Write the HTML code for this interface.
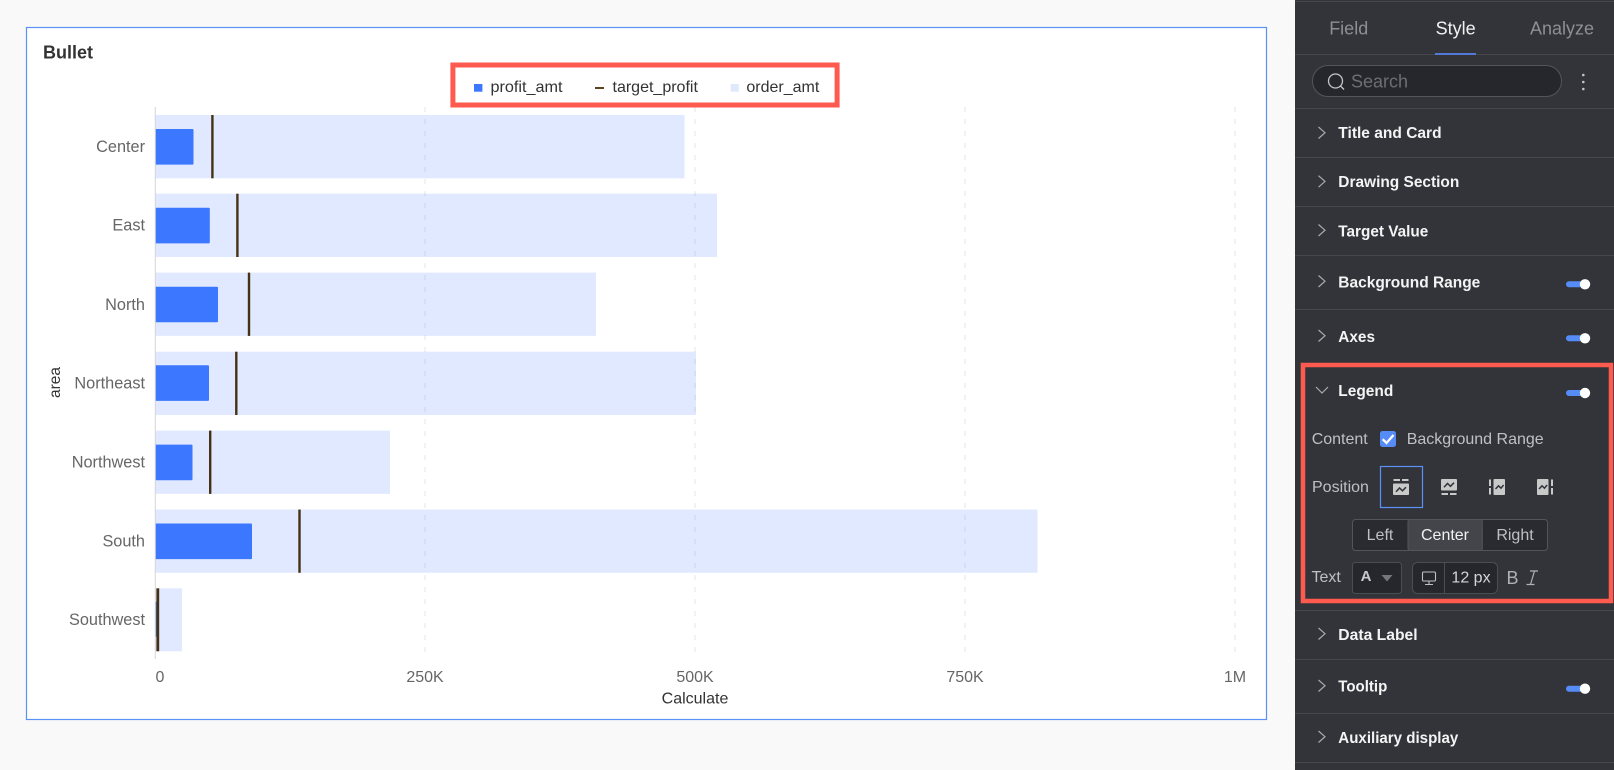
<!DOCTYPE html>
<html lang="en">
<head>
<meta charset="utf-8">
<title>Bullet</title>
<style>
html,body{margin:0;padding:0;width:1614px;height:770px;overflow:hidden;background:#f9f9f9}
svg{display:block;font-family:"Liberation Sans",Arial,sans-serif}
text{dominant-baseline:central}
.cat{font-size:16.3px;fill:#666;text-anchor:end;transform:translateY(.8px)}
.ax{font-size:16px;fill:#666;text-anchor:middle}
.leg{font-size:16px;fill:#333}
.row{font-size:15.3px;font-weight:700;fill:#f4f4f5;transform:translateY(.5px)}
.lbl{font-size:16px;fill:#bfc0c3}
.chev{fill:none;stroke:#a9aaad;stroke-width:1.2}
.line{stroke:#46474c;stroke-width:1}
.grid{stroke:#e6e6e6;stroke-width:1;stroke-dasharray:5 7}
.bg{fill:#3c78ff;fill-opacity:.16}
.fg{fill:#3c78ff}
.tg{fill:#453213}
.tt{fill:#568cf5}
.kn{fill:#fff}
.ico{fill:#c9c9c9}
.zig{fill:none;stroke:#333439;stroke-width:1.5}
</style>
</head>
<body>
<svg width="1614" height="770" viewBox="0 0 1614 770" xmlns="http://www.w3.org/2000/svg">
<rect width="1614" height="770" fill="#f9f9f9"/>
<!-- chart card -->
<rect x="26.5" y="27.5" width="1240" height="692" fill="#fff" stroke="#5b90f5" stroke-width="1.2"/>
<text x="43" y="52.5" font-size="18" font-weight="700" fill="#333">Bullet</text>

<!-- grid -->
<line class="grid" x1="425" y1="107" x2="425" y2="657"/>
<line class="grid" x1="695" y1="107" x2="695" y2="657"/>
<line class="grid" x1="965" y1="107" x2="965" y2="657"/>
<line class="grid" x1="1235" y1="107" x2="1235" y2="657"/>

<!-- background bars -->
<rect class="bg" x="155" y="115" width="529.5" height="63.3"/>
<rect class="bg" x="155" y="193.7" width="562" height="63.3"/>
<rect class="bg" x="155" y="272.6" width="441" height="63.3"/>
<rect class="bg" x="155" y="351.7" width="541" height="63.3"/>
<rect class="bg" x="155" y="430.6" width="235" height="63.3"/>
<rect class="bg" x="155" y="509.5" width="882.5" height="63.3"/>
<rect class="bg" x="155" y="588.3" width="27" height="63"/>

<!-- value bars -->
<rect class="fg" x="155" y="129" width="38.5" height="35.6" rx="1"/>
<rect class="fg" x="155" y="207.8" width="54.8" height="35.6" rx="1"/>
<rect class="fg" x="155" y="286.7" width="63" height="35.6" rx="1"/>
<rect class="fg" x="155" y="365.3" width="54" height="35.6" rx="1"/>
<rect class="fg" x="155" y="444.6" width="37.5" height="35.6" rx="1"/>
<rect class="fg" x="155" y="523.5" width="97" height="35.6" rx="1"/>
<rect class="fg" x="155" y="601.7" width="2" height="35"/>

<!-- target bars -->
<rect class="tg" x="211.2" y="115" width="2.4" height="63.3"/>
<rect class="tg" x="236.2" y="193.7" width="2.4" height="63.3"/>
<rect class="tg" x="247.8" y="272.6" width="2.4" height="63.3"/>
<rect class="tg" x="235.1" y="351.7" width="2.4" height="63.3"/>
<rect class="tg" x="209" y="430.6" width="2.4" height="63.3"/>
<rect class="tg" x="298.3" y="509.5" width="2.4" height="63.3"/>
<rect class="tg" x="156.4" y="588.3" width="2.8" height="63"/>

<!-- axis -->
<line x1="155.3" y1="107" x2="155.3" y2="659" stroke="#d5d5d5" stroke-width="1"/>

<text class="cat" x="145" y="146">Center</text>
<text class="cat" x="145" y="224.5">East</text>
<text class="cat" x="145" y="304">North</text>
<text class="cat" x="145" y="382.7">Northeast</text>
<text class="cat" x="145" y="461.5">Northwest</text>
<text class="cat" x="145" y="540.5">South</text>
<text class="cat" x="145" y="619">Southwest</text>

<text transform="translate(55.5 382.5) rotate(-90)" font-size="15.5" fill="#333" text-anchor="middle">area</text>

<text class="ax" x="160" y="677.5">0</text>
<text class="ax" x="425" y="677.5">250K</text>
<text class="ax" x="695" y="677.5">500K</text>
<text class="ax" x="965" y="677.5">750K</text>
<text class="ax" x="1235" y="677.5">1M</text>
<text x="695" y="699" font-size="16" fill="#333" text-anchor="middle">Calculate</text>

<!-- chart legend -->
<rect x="452.9" y="65" width="384.2" height="40" fill="#fff" stroke="#ff5a4f" stroke-width="5"/>
<rect x="474" y="84" width="8.4" height="7.7" fill="#3c78ff"/>
<text class="leg" x="490.5" y="87.5" textLength="72" lengthAdjust="spacingAndGlyphs">profit_amt</text>
<rect x="595" y="87" width="9" height="2" fill="#5a4520"/>
<text class="leg" x="612.5" y="87.5">target_profit</text>
<rect x="730.6" y="84" width="8.2" height="7.7" fill="#e0e8fd"/>
<text class="leg" x="746.4" y="87.5">order_amt</text>

<!-- side panel -->
<rect x="1295" y="0" width="319" height="770" fill="#333439"/>
<line class="line" x1="1295" y1="1.5" x2="1614" y2="1.5"/>
<text x="1348.7" y="28.5" font-size="18" fill="#8e8f93" text-anchor="middle">Field</text>
<text x="1455.7" y="28.5" font-size="18" fill="#f1f1f2" text-anchor="middle">Style</text>
<text x="1562" y="28.5" font-size="18" fill="#8e8f93" text-anchor="middle">Analyze</text>
<line class="line" x1="1295" y1="54.5" x2="1614" y2="54.5"/>
<rect x="1435" y="53" width="41" height="2" fill="#5478d8"/>

<rect x="1312.5" y="65.5" width="249" height="31" rx="15.5" fill="#26272c" stroke="#54555a"/>
<circle cx="1335.5" cy="81" r="7" fill="none" stroke="#c4c5c7" stroke-width="1.3"/>
<line x1="1340.5" y1="86" x2="1344" y2="89.5" stroke="#c4c5c7" stroke-width="1.3"/>
<text x="1351" y="81.5" font-size="18" fill="#6d6e72">Search</text>
<circle cx="1583.3" cy="75" r="1.3" fill="#c4c5c7"/>
<circle cx="1583.3" cy="82" r="1.3" fill="#c4c5c7"/>
<circle cx="1583.3" cy="89" r="1.3" fill="#c4c5c7"/>
<line class="line" x1="1295" y1="108.5" x2="1614" y2="108.5"/>

<!-- rows -->
<path class="chev" d="M1318.5 127l6.5 5.7-6.5 5.8"/>
<text class="row" x="1338.3" y="133" textLength="103.3" lengthAdjust="spacingAndGlyphs">Title and Card</text>
<line class="line" x1="1295" y1="157.5" x2="1614" y2="157.5"/>

<path class="chev" d="M1318.5 175.7l6.5 5.7-6.5 5.8"/>
<text class="row" x="1338.3" y="182" textLength="121" lengthAdjust="spacingAndGlyphs">Drawing Section</text>
<line class="line" x1="1295" y1="206.5" x2="1614" y2="206.5"/>

<path class="chev" d="M1318.5 224.5l6.5 5.7-6.5 5.8"/>
<text class="row" x="1338.3" y="231.3" textLength="90" lengthAdjust="spacingAndGlyphs">Target Value</text>
<line class="line" x1="1295" y1="255.5" x2="1614" y2="255.5"/>

<path class="chev" d="M1318.5 275.5l6.5 5.7-6.5 5.8"/>
<text class="row" x="1338.3" y="282.3" textLength="142" lengthAdjust="spacingAndGlyphs">Background Range</text>
<rect class="tt" x="1566" y="281.3" width="18" height="6" rx="3"/>
<circle class="kn" cx="1585" cy="284.3" r="5.2"/>
<line class="line" x1="1295" y1="309.5" x2="1614" y2="309.5"/>

<path class="chev" d="M1318.5 330l6.5 5.7-6.5 5.8"/>
<text class="row" x="1338.3" y="337" textLength="36.7" lengthAdjust="spacingAndGlyphs">Axes</text>
<rect class="tt" x="1566" y="335.3" width="18" height="6" rx="3"/>
<circle class="kn" cx="1585" cy="338.3" r="5.2"/>

<!-- legend section -->
<rect x="1303" y="365" width="308" height="236" fill="none" stroke="#ff5a4f" stroke-width="4.5"/>
<path class="chev" d="M1316 387l6 6 6-6"/>
<text class="row" x="1338.3" y="391" textLength="55" lengthAdjust="spacingAndGlyphs">Legend</text>
<rect class="tt" x="1566" y="390" width="18" height="6" rx="3"/>
<circle class="kn" cx="1585" cy="393" r="5.2"/>

<text class="lbl" x="1311.7" y="439.7">Content</text>
<rect x="1380" y="431" width="16" height="16" rx="2.5" fill="#568cf5"/>
<path d="M1382.7 439.2l3.8 3.8 7-8" fill="none" stroke="#fff" stroke-width="2.2"/>
<text class="lbl" x="1406.7" y="439.7">Background Range</text>

<text class="lbl" x="1312" y="487.3">Position</text>
<rect x="1380.5" y="466.5" width="42" height="41" fill="none" stroke="#5b90f5" stroke-width="1.2"/>
<!-- icon: top -->
<rect class="ico" x="1393.5" y="479" width="6.5" height="2"/><rect class="ico" x="1402" y="479" width="6.5" height="2"/>
<rect class="ico" x="1393" y="483.500" width="16" height="11.500" rx="1"/>
<path class="zig" d="M1396 491.800l3.500-3.800 3 2.800 3.500-3.600"/>
<!-- icon: bottom -->
<rect class="ico" x="1441" y="479" width="16" height="11.500" rx="1"/>
<path class="zig" d="M1444 487.300l3.500-3.800 3 2.800 3.500-3.600"/>
<rect class="ico" x="1441.500" y="493" width="6.500" height="2"/><rect class="ico" x="1450" y="493" width="6.500" height="2"/>
<!-- icon: left -->
<rect class="ico" x="1489" y="479.500" width="2" height="6.500"/><rect class="ico" x="1489" y="488" width="2" height="6.500"/>
<rect class="ico" x="1493.500" y="479" width="11.500" height="16" rx="1"/>
<path class="zig" d="M1495.500 489l3-3.200 2.500 2.400 2.600-3.200"/>
<!-- icon: right -->
<rect class="ico" x="1537" y="479" width="11.500" height="16" rx="1"/>
<path class="zig" d="M1539 489l3-3.200 2.500 2.400 2.600-3.200"/>
<rect class="ico" x="1551" y="479.500" width="2" height="6.500"/><rect class="ico" x="1551" y="488" width="2" height="6.500"/>

<!-- align segmented -->
<rect x="1352.500" y="519.500" width="195" height="31" rx="3" fill="#2a2b30" stroke="#54555a"/>
<rect x="1408" y="519.500" width="74.300" height="31" rx="2" fill="#44454a" stroke="#54555a"/>
<text x="1380" y="535.500" font-size="16" fill="#bfc0c3" text-anchor="middle">Left</text>
<text x="1445" y="535.500" font-size="16" fill="#f1f1f2" text-anchor="middle">Center</text>
<text x="1515" y="535.500" font-size="16" fill="#bfc0c3" text-anchor="middle">Right</text>

<!-- text row -->
<text class="lbl" x="1311.500" y="577.700">Text</text>
<rect x="1352.500" y="562.500" width="49" height="31" rx="3" fill="#26272c" stroke="#4c4d52"/>
<text x="1366" y="576.500" font-size="15" font-weight="700" fill="#c9c9cb" text-anchor="middle">A</text>
<path d="M1381.500 575h11l-5.500 6.500z" fill="#74767c"/>
<rect x="1412.500" y="562.500" width="85" height="31" rx="5" fill="#26272c" stroke="#4c4d52"/>
<line x1="1444.500" y1="562.500" x2="1444.500" y2="593.500" stroke="#4c4d52"/>
<rect x="1422.500" y="572" width="13" height="9" rx="1" fill="none" stroke="#bfc0c3" stroke-width="1.100"/>
<path d="M1429 581v3M1425 584.500h8" fill="none" stroke="#bfc0c3" stroke-width="1.100"/>
<text x="1471" y="578" font-size="16" fill="#d4d5d7" text-anchor="middle">12 px</text>
<text x="1512.500" y="578" font-size="18" fill="#b0b1b4" text-anchor="middle">B</text>
<path d="M1530 571h8M1526.500 584.500h8M1534.500 571l-4 13.500" fill="none" stroke="#b0b1b4" stroke-width="1.200"/>

<!-- lower rows -->
<line class="line" x1="1295" y1="610.500" x2="1614" y2="610.500"/>
<path class="chev" d="M1318.500 628l6.500 5.700-6.500 5.800"/>
<text class="row" x="1338.300" y="635" textLength="79.300" lengthAdjust="spacingAndGlyphs">Data Label</text>
<line class="line" x1="1295" y1="659.500" x2="1614" y2="659.500"/>
<path class="chev" d="M1318.500 680l6.500 5.700-6.500 5.800"/>
<text class="row" x="1338.300" y="686.500" textLength="49" lengthAdjust="spacingAndGlyphs">Tooltip</text>
<rect class="tt" x="1566" y="685.700" width="18" height="6" rx="3"/>
<circle class="kn" cx="1585" cy="688.700" r="5.200"/>
<line class="line" x1="1295" y1="713.500" x2="1614" y2="713.500"/>
<path class="chev" d="M1318.500 731l6.500 5.700-6.500 5.800"/>
<text class="row" x="1338.300" y="738" textLength="120" lengthAdjust="spacingAndGlyphs">Auxiliary display</text>
<line class="line" x1="1295" y1="762.500" x2="1614" y2="762.500"/>
</svg>
</body>
</html>
